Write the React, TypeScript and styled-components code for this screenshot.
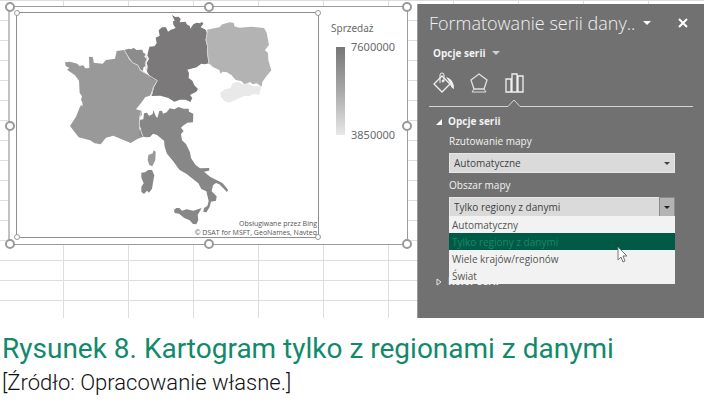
import React, { useState } from "react";
import styled, { createGlobalStyle, css } from "styled-components";

const GlobalStyle = createGlobalStyle`
  *, *::before, *::after { box-sizing: border-box; }
  body { margin: 0; background: #ffffff; }
  button, select { font: inherit; color: inherit; }
`;

const Figure = styled.figure`
  margin: 0;
  font-family: "Open Sans", "Noto Sans", sans-serif;
`;

const Workspace = styled.div`
  display: flex;
  height: 318px;
  padding-top: 4px;
  background-color: #ffffff;
  background-image:
    linear-gradient(to right, #dedede 1px, transparent 1px),
    linear-gradient(to bottom, #dedede 1px, transparent 1px);
  background-size: 65px 20px;
  background-position: 63px 0;
`;

const Sheet = styled.div`
  flex: 1;
  min-width: 0;
  padding: 2px 9px 0 8px;
`;

const ChartFrame = styled.section`
  position: relative;
  display: flex;
  height: 239px;
  padding: 5px 5px 6px 6px;
  background: #ffffff;
  border: 1px solid #9c9c9c;
  border-left: 2px solid #c2c2c2;
`;

const Handle = styled.span<{ $x: number; $y: number; $small?: boolean }>`
  position: absolute;
  left: ${(p) => p.$x}%;
  top: ${(p) => p.$y}%;
  width: ${(p) => (p.$small ? 6 : 10)}px;
  height: ${(p) => (p.$small ? 6 : 10)}px;
  border: ${(p) => (p.$small ? 1 : 2)}px solid #9a9a9a;
  border-radius: 50%;
  background: #ffffff;
  transform: translate(-50%, -50%);
`;

const Plot = styled.div`
  position: relative;
  flex: 1;
  min-width: 0;
  border: 1px solid #8f8f8f;
`;

const MapDrawing = styled.svg`
  display: block;
  width: 100%;
  height: 100%;
`;

const MapCredit = styled.p`
  position: absolute;
  right: 1px;
  bottom: 0;
  margin: 0;
  font-size: 7px;
  line-height: 9px;
  text-align: right;
  color: #555555;
  white-space: nowrap;
`;

const Legend = styled.div`
  flex: 0 0 83px;
  padding: 8px 0 0 12px;
  font-family: "Noto Sans", sans-serif;
  font-size: 11px;
  line-height: 16px;
  color: #6a6a6a;
`;

const LegendTitle = styled.div`
  font-size: 10px;
`;

const LegendScale = styled.div`
  display: flex;
  gap: 6px;
  padding: 3px 0 0 5px;
`;

const LegendBar = styled.div`
  width: 9px;
  height: 88px;
  margin-top: 8px;
  background: linear-gradient(#777777, #a8a8a8 50%, #e8e8e8);
`;

const LegendValues = styled.div`
  display: flex;
  flex-direction: column;
  justify-content: space-between;
  height: 104px;
`;

const Pane = styled.aside`
  flex: 0 0 287px;
  padding: 6px 11px 0 11px;
  background: #717171;
  border-left: 1px solid #9a9a9a;
  color: #f2f2f2;
  font-size: 10px;
`;

const PaneHeader = styled.header`
  display: flex;
  align-items: center;
  height: 26px;
`;

const PaneTitle = styled.h2`
  margin: 0;
  font-size: 18px;
  line-height: 26px;
  font-weight: 300;
  white-space: nowrap;
`;

const plainButton = css`
  padding: 0;
  border: 0;
  background: none;
  cursor: pointer;
`;

const IconButton = styled.button<{ $push?: boolean }>`
  ${plainButton}
  display: flex;
  align-items: center;
  justify-content: center;
  width: 20px;
  height: 24px;
  margin-left: ${(p) => (p.$push ? "auto" : "2px")};
`;

const SeriesPicker = styled.button`
  ${plainButton}
  display: flex;
  align-items: center;
  gap: 6px;
  height: 34px;
  padding-left: 4px;
  font-weight: 700;
`;

const TabRow = styled.nav`
  display: flex;
  gap: 12px;
  height: 28px;
  padding-left: 4px;
`;

const TabButton = styled.button`
  ${plainButton}
  width: 24px;
  height: 28px;

  svg { display: block; }
`;

const Divider = styled.svg`
  display: block;
  width: 264px;
  max-width: 100%;
  height: 10px;
`;

const SectionToggle = styled.button`
  ${plainButton}
  display: flex;
  align-items: center;
  gap: 6px;
  height: 21px;
  padding: 6px 0 0 7px;
  line-height: 15px;
  font-weight: 700;
`;

const Fields = styled.div`
  padding: 0 18px 0 20px;
`;

const FieldLabel = styled.label`
  display: block;
  height: 24px;
  padding-top: 4px;
  line-height: 16px;
  font-size: 10px;
`;

const SelectWrap = styled.div`
  position: relative;
  display: flex;
  height: 20px;
`;

const Select = styled.select`
  appearance: none;
  flex: 1;
  width: 100%;
  height: 20px;
  padding: 0 20px 0 4px;
  border: 1px solid #e6e6e6;
  border-radius: 0;
  background: #dadada;
  color: #3f3f3f;
  font-size: 10px;
  line-height: 16px;
`;

const SelectArrow = styled.span<{ $pressed?: boolean }>`
  position: absolute;
  top: 0;
  right: 0;
  display: flex;
  align-items: center;
  justify-content: center;
  width: 16px;
  height: 20px;
  pointer-events: none;
  ${(p) => p.$pressed && css`
    background: #b4b4b4;
    border: 1px solid #8b8b8b;
  `}
`;

const OptionList = styled.div`
  position: absolute;
  top: 19px;
  left: 0;
  right: 0;
  z-index: 1;
  display: flex;
  flex-direction: column;
  background: #f2f2f2;
`;

const Option = styled.button<{ $active: boolean }>`
  ${plainButton}
  height: 17px;
  padding-left: 3px;
  text-align: left;
  line-height: 16px;
  color: ${(p) => (p.$active ? "#148a66" : "#555555")};
  background: ${(p) => (p.$active ? "#005a45" : "transparent")};
`;

const Pointer = styled.svg`
  position: absolute;
  top: 49px;
  right: 47px;
  z-index: 2;
  pointer-events: none;
`;

const ColorSection = styled.div`
  margin-top: 51px;
`;

const Caption = styled.figcaption`
  padding: 14px 2px 0;
  font-family: Roboto, sans-serif;
  color: #118a6c;
`;

const CaptionTitle = styled.h1`
  margin: 0;
  font-size: 28px;
  line-height: 34px;
  font-weight: 400;
  white-space: nowrap;
`;

const Source = styled.p`
  margin: 0;
  font-size: 22px;
  line-height: 34px;
  font-weight: 300;
  color: #111111;
`;

const corners = [
  [0, 0], [50, 0], [100, 0],
  [0, 50], [100, 50],
  [0, 100], [50, 100], [100, 100],
];

const areas = ["Automatyczny", "Tylko regiony z danymi", "Wiele krajów/regionów", "Świat"];

function Arrow({ color = "#ffffff", size = 8 }: { color?: string; size?: number }) {
  return (
    <svg width={size} height={size / 2} viewBox="0 0 8 4" aria-hidden="true">
      <path d="M0 0H8L4 4Z" fill={color} />
    </svg>
  );
}

function EuropeMap() {
  return (
    <MapDrawing viewBox="51 39 903 672" preserveAspectRatio="none" role="img" aria-label="Sprzedaż według krajów">
      <path
        fill="#999999"
        d="M195 187L210 185L232 191L238 198L250 196L256 205L268 204L267 170L279 172L281 188L308 191L318 180L345 176L350 153L372 150L380 160L386 176L398 188L414 196L421 211L440 222L473 242L462 258L450 287L436 291L426 305L408 328L424 332L426 345L418 352L417 375L419 390L430 410L412 417L392 429L372 421L340 407L318 413L302 433L284 430L270 421L236 412L210 378L228 350L238 325L243 315L248 319L247 307L243 300L246 289L239 279L237 242L225 226L201 209L208 204L197 198Z"
      />
      <path fill="#999999" d="M445 465L458 460L461 451L467 455L466 480L457 499L448 495L443 480Z" />
      <path
        fill="#8c8c8c"
        d="M373 150L386 146L394 148L400 143L410 150L427 149L430 158L437 162L433 170L441 177L436 187L439 197L431 201L428 213L420 208L414 196L398 188L387 174Z"
      />
      <path
        fill="#7b7979"
        d="M516 45L526 51L536 50L542 57L539 67L557 65L560 73L569 78L571 86L580 73L590 68L600 70L606 65L610 71L602 82L617 89L621 100L617 120L622 139L621 157L627 190L614 193L604 191L590 202L562 209L567 219L566 234L577 242L583 256L594 267L589 275L570 285L577 294L571 306L557 299L540 299L523 305L505 294L481 287L455 288L462 262L472 242L455 236L441 215L443 199L440 189L447 177L442 166L448 140L463 139L470 130L467 113L479 107L476 91L486 82L498 82L504 95L513 89L527 84L520 74L519 64L524 62Z"
      />
      <path
        fill="#b3b3b3"
        d="M620 89L658 82L667 73L690 67L702 69L703 79L718 83L755 80L792 84L800 98L807 134L795 151L804 159L805 181L814 211L798 230L787 246L785 260L770 250L758 253L750 246L735 254L723 243L707 240L695 226L681 217L667 215L662 222L658 210L640 202L626 190L621 157L622 139L617 120L621 101Z"
      />
      <path
        fill="#e9e9e9"
        d="M716 245L727 253L743 250L757 258L784 259L782 270L777 284L762 282L748 288L733 287L720 294L704 301L687 308L672 302L662 289L661 278L676 267L691 265L698 250Z"
      />
      <path
        fill="#878787"
        d="M421 359L430 358L432 340L441 338L447 348L458 342L460 331L467 348L472 354L478 333L486 332L489 341L500 337L509 325L523 328L535 321L551 326L566 326L567 335L580 341L579 367L562 368L549 377L543 383L551 393L543 402L546 421L558 432L570 457L573 474L586 494L600 505L628 504L627 512L612 515L631 531L660 545L668 550L684 569L681 577L675 570L658 553L648 549L639 556L635 574L650 589L648 602L633 605L629 621L619 637L610 636L612 624L622 618L626 603L619 574L604 567L595 550L576 535L560 522L538 509L519 483L501 461L494 440L492 422L471 405L459 401L450 411L438 412L419 407L418 393L424 387L416 375Z"
      />
      <path fill="#878787" d="M424 518L435 517L445 510L456 510L463 526L459 548L456 566L447 578L441 572L432 582L424 575L424 561L431 550L424 533Z" />
      <path fill="#878787" d="M522 630L529 624L538 624L546 632L560 628L580 632L598 626L605 624L600 633L593 645L595 660L589 673L579 672L569 661L553 654L537 641L524 639Z" />
      <path
        d="M373 151L387 174L398 188L414 196L421 211L440 222L472 242L460 262L454 288M436 161L441 177L436 190L439 213M623 91L618 120L623 139L622 157L627 190M424 335L419 352L418 378L428 408"
        fill="none"
        stroke="#d5d5d5"
        strokeWidth="3"
      />
    </MapDrawing>
  );
}

export default function App() {
  const [area, setArea] = useState(areas[1]);
  return (
    <Figure>
      <GlobalStyle />
      <Workspace>
        <Sheet>
          <ChartFrame>
            <Plot>
              <EuropeMap />
              <MapCredit>
                Obsługiwane przez Bing
                <br />© DSAT for MSFT, GeoNames, Navteq
              </MapCredit>
              {[[0, 0], [100, 0], [0, 100], [100, 100]].map(([x, y]) => (
                <Handle key={`${x}-${y}`} $x={x} $y={y} $small />
              ))}
            </Plot>
            <Legend>
              <LegendTitle>Sprzedaż</LegendTitle>
              <LegendScale>
                <LegendBar />
                <LegendValues>
                  <span>7600000</span>
                  <span>3850000</span>
                </LegendValues>
              </LegendScale>
            </Legend>
            {corners.map(([x, y]) => (
              <Handle key={`${x}-${y}`} $x={x} $y={y} />
            ))}
          </ChartFrame>
        </Sheet>
        <Pane>
          <PaneHeader>
            <PaneTitle>Formatowanie serii dany..</PaneTitle>
            <IconButton aria-label="Opcje okienka"><Arrow /></IconButton>
            <IconButton $push aria-label="Zamknij">
              <svg width="10" height="10" viewBox="0 0 10 10">
                <path d="M1 1L9 9M9 1L1 9" stroke="#ffffff" strokeWidth="2" />
              </svg>
            </IconButton>
          </PaneHeader>
          <SeriesPicker>Opcje serii <Arrow color="#cfcfcf" /></SeriesPicker>
          <TabRow>
            <TabButton aria-label="Wypełnienie i linia">
              <svg width="24" height="24" viewBox="0 0 24 24" fill="none" stroke="#f0f0f0">
                <path d="M9 4L17 12L9 20L1 12Z" strokeWidth="1.3" />
                <path d="M7 11V3Q7 1 9 1T11 3V9" />
                <circle cx="10" cy="9" r="1" fill="#f0f0f0" />
                <path d="M13 5Q21 7 21 17Q17 15 17 11Z" fill="#f0f0f0" stroke="none" />
              </svg>
            </TabButton>
            <TabButton aria-label="Efekty">
              <svg width="24" height="24" viewBox="0 0 24 24" fill="none" stroke="#e0e0e0">
                <path d="M10 2L18 8L15 17H5L2 8Z" strokeWidth="1.3" />
                <path d="M5 17L3 20H17L15 17" />
              </svg>
            </TabButton>
            <TabButton aria-label="Opcje serii">
              <svg width="24" height="24" viewBox="0 0 24 24" fill="none" stroke="#f0f0f0" strokeWidth="1.3">
                <path d="M1 7H6V20H1ZM7 2H12V20H7ZM13 4H18V20H13Z" />
              </svg>
            </TabButton>
          </TabRow>
          <Divider viewBox="0 0 264 10" fill="none" stroke="#d5d5d5">
            <path d="M0 8.5H79L85 2L91 8.5H264" />
          </Divider>
          <SectionToggle aria-expanded="true">
            <svg width="6" height="6" viewBox="0 0 6 6"><path d="M6 0V6H0Z" fill="#ffffff" /></svg>
            Opcje serii
          </SectionToggle>
          <Fields>
            <FieldLabel htmlFor="projection">Rzutowanie mapy</FieldLabel>
            <SelectWrap>
              <Select id="projection" defaultValue="Automatyczne">
                <option>Automatyczne</option>
              </Select>
              <SelectArrow><Arrow color="#444444" size={6} /></SelectArrow>
            </SelectWrap>
            <FieldLabel htmlFor="area">Obszar mapy</FieldLabel>
            <SelectWrap>
              <Select id="area" value={area} onChange={(e) => setArea(e.target.value)}>
                {areas.map((name) => <option key={name}>{name}</option>)}
              </Select>
              <SelectArrow $pressed><Arrow color="#222222" size={6} /></SelectArrow>
              <OptionList>
                {areas.map((name) => (
                  <Option key={name} $active={name === area} onClick={() => setArea(name)}>{name}</Option>
                ))}
              </OptionList>
              <Pointer width="11" height="17" viewBox="0 0 11 17">
                <path d="M1 1V14L4 11L6 16L8 15L6 10H10Z" fill="#ffffff" stroke="#777777" />
              </Pointer>
            </SelectWrap>
          </Fields>
          <ColorSection>
            <SectionToggle aria-expanded="false">
              <svg width="6" height="8" viewBox="0 0 6 8"><path d="M1 1L5 4L1 7Z" fill="none" stroke="#e8e8e8" /></svg>
              Kolor serii
            </SectionToggle>
          </ColorSection>
        </Pane>
      </Workspace>
      <Caption>
        <CaptionTitle>Rysunek 8. Kartogram tylko z regionami z danymi</CaptionTitle>
        <Source>[Źródło: Opracowanie własne.]</Source>
      </Caption>
    </Figure>
  );
}
